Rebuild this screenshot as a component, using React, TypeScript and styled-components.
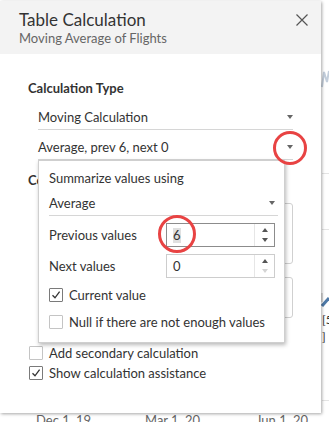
import React from "react";
import styled, { createGlobalStyle } from "styled-components";

const Global = createGlobalStyle`
  html, body { margin: 0; padding: 0; background: #fff; }
  body { font-family: Lato, "Open Sans", sans-serif; color: #333; overflow: hidden; }
  * { box-sizing: border-box; }
`;

const Page = styled.div`
  position: relative;
  width: 329px;
  height: 422px;
  overflow: hidden;
  background: #fff;
`;

/* ---------- chart behind the dialog ---------- */
const Chart = styled.div`
  position: absolute;
  inset: 0;
`;
const GridLine = styled.div<{ $top: number }>`
  position: absolute;
  left: 322px;
  right: 0;
  top: ${(p) => p.$top}px;
  height: 1px;
  background: #e4e4e4;
`;
const AxisLabel = styled.span<{ $left: number }>`
  position: absolute;
  top: 412px;
  left: ${(p) => p.$left}px;
  font-size: 13px;
  line-height: 16px;
  color: #666;
  white-space: nowrap;
`;
const ChartGlyph = styled.span<{ $top: number }>`
  position: absolute;
  left: 322px;
  top: ${(p) => p.$top}px;
  font-size: 12px;
  line-height: 14px;
  color: #333;
`;
const ChartMark = styled.svg<{ $top: number }>`
  position: absolute;
  left: 321px;
  top: ${(p) => p.$top}px;
`;

/* ---------- dialog ---------- */
const Dialog = styled.div`
  position: absolute;
  left: 0;
  top: 1px;
  width: 321px;
  height: 412px;
  background: #fff;
  box-shadow: 1px 1px 3px rgba(0, 0, 0, 0.35);
  display: flex;
  flex-direction: column;
`;

const Header = styled.div`
  height: 53px;
  background: #f3f3f3;
  padding: 8px 12px 0 19px;
  display: flex;
  justify-content: space-between;
  align-items: flex-start;
`;
const TitleBlock = styled.div`
  display: flex;
  flex-direction: column;
`;
const Title = styled.div`
  font-size: 17px;
  line-height: 21px;
  color: #333;
`;
const Subtitle = styled.div`
  font-size: 13px;
  line-height: 16px;
  color: #666;
`;
const CloseButton = styled.button`
  border: none;
  background: transparent;
  padding: 0;
  margin-top: 4px;
  width: 14px;
  height: 14px;
  display: flex;
  align-items: center;
  justify-content: center;
  cursor: pointer;
`;

const Body = styled.div`
  padding: 26px 28px 0 28px;
  display: flex;
  flex-direction: column;
`;
const SectionTitle = styled.div<{ $gap?: number }>`
  font-size: 13px;
  font-weight: 700;
  line-height: 16px;
  color: #333;
  margin-top: ${(p) => p.$gap ?? 0}px;
  margin-bottom: 4px;
`;
const SelectRow = styled.div<{ $indent: number; $width: number; $pad: number }>`
  margin-left: ${(p) => p.$indent}px;
  width: ${(p) => p.$width}px;
  display: flex;
  align-items: center;
  justify-content: space-between;
  padding: 9px ${(p) => p.$pad}px 4px 0;
  line-height: 16px;
  font-size: 13px;
  color: #333;
  border-bottom: 1px solid #d6d6d6;
`;
const Caret = styled.span`
  width: 0;
  height: 0;
  border-left: 3.5px solid transparent;
  border-right: 3.5px solid transparent;
  border-top: 4px solid #666;
`;
const ListBox = styled.div<{ $h: number; $gap: number }>`
  margin-left: 10px;
  width: 255px;
  height: ${(p) => p.$h}px;
  margin-top: ${(p) => p.$gap}px;
  border: 1px solid #d0d0d0;
  border-radius: 3px;
`;
const CheckRow = styled.label<{ $gap?: number; $indent?: number }>`
  display: flex;
  align-items: center;
  gap: 6px;
  height: 20px;
  margin-top: ${(p) => p.$gap ?? 0}px;
  margin-left: ${(p) => p.$indent ?? 0}px;
  font-size: 13px;
  color: #333;
  white-space: nowrap;
`;
const Box = styled.span<{ $checked: boolean }>`
  width: 14px;
  height: 14px;
  flex: none;
  border: 1px solid ${(p) => (p.$checked ? "#7a7a7a" : "#c4c4c4")};
  border-radius: 1px;
  background: #fff;
  display: flex;
  align-items: center;
  justify-content: center;
`;

/* ---------- popup ---------- */
const Popup = styled.div`
  position: absolute;
  left: 38px;
  top: 159px;
  width: 247px;
  height: 183px;
  background: #fff;
  border: 1px solid #cfcfcf;
  box-shadow: 1px 2px 4px rgba(0, 0, 0, 0.28);
  padding: 9px 0 0 10px;
  display: flex;
  flex-direction: column;
`;
const PopupLabel = styled.div`
  font-size: 13px;
  line-height: 16px;
  color: #333;
`;
const SpinRow = styled.div`
  display: flex;
  align-items: center;
  margin-top: 7px;
`;
const SpinLabel = styled.div`
  width: 117px;
  font-size: 13px;
  line-height: 16px;
  color: #333;
`;
const SpinBox = styled.div<{ $focused: boolean }>`
  width: 109px;
  height: 24px;
  border: 1px solid ${(p) => (p.$focused ? "#8c8c8c" : "#cdcdcd")};
  display: flex;
`;
const SpinValue = styled.div`
  flex: 1;
  padding-left: 6px;
  display: flex;
  align-items: center;
  font-size: 13px;
  color: #333;
`;
const Selected = styled.span`
  background: #e0e0e0;
  line-height: 15px;
`;
const Spinner = styled.div`
  width: 20px;
  border-left: 1px solid #e6e6e6;
  display: flex;
  flex-direction: column;
  align-items: center;
  justify-content: space-between;
  padding: 4px 0;
`;
const ArrowUp = styled.span<{ $dim?: boolean }>`
  width: 0;
  height: 0;
  border-left: 3.5px solid transparent;
  border-right: 3.5px solid transparent;
  border-bottom: 4px solid ${(p) => (p.$dim ? "#d4d4d4" : "#555")};
`;
const ArrowDown = styled.span<{ $dim?: boolean }>`
  width: 0;
  height: 0;
  border-left: 3.5px solid transparent;
  border-right: 3.5px solid transparent;
  border-top: 4px solid ${(p) => (p.$dim ? "#d4d4d4" : "#555")};
`;

/* ---------- annotations ---------- */
const Ring = styled.div<{ $x: number; $y: number; $d: number }>`
  position: absolute;
  left: ${(p) => p.$x - p.$d / 2}px;
  top: ${(p) => p.$y - p.$d / 2}px;
  width: ${(p) => p.$d}px;
  height: ${(p) => p.$d}px;
  border: 3px solid #e84343;
  border-radius: 50%;
  pointer-events: none;
`;

const Check = () => (
  <svg width="10" height="10" viewBox="0 0 10 10">
    <path d="M1.5 5.2 L4 7.8 L8.6 1.6" fill="none" stroke="#333" strokeWidth="1.3" />
  </svg>
);

const CheckItem = ({
  checked,
  label,
  gap,
  indent,
}: {
  checked: boolean;
  label: string;
  gap?: number;
  indent?: number;
}) => (
  <CheckRow $gap={gap} $indent={indent}>
    <Box $checked={checked}>{checked && <Check />}</Box>
    {label}
  </CheckRow>
);

export default function App() {
  return (
    <Page>
      <Global />
      <Chart>
        <ChartMark $top={68} width="8" height="20" viewBox="0 0 8 20">
          <path d="M1 19 L3 4 L6 14 L8 3" fill="none" stroke="#c3cedb" strokeWidth="2" />
        </ChartMark>
        <GridLine $top={173} />
        <GridLine $top={229} />
        <ChartMark $top={292} width="8" height="16" viewBox="0 0 8 16">
          <path d="M1 1 L1 10" stroke="#bbb" strokeWidth="1" />
          <path d="M1 14 L8 6" stroke="#4e79a7" strokeWidth="3" />
        </ChartMark>
        <ChartGlyph $top={313}>[5</ChartGlyph>
        <ChartGlyph $top={330}>]</ChartGlyph>
        <GridLine $top={400} />
        <AxisLabel $left={36}>Dec 1, 19</AxisLabel>
        <AxisLabel $left={145}>Mar 1, 20</AxisLabel>
        <AxisLabel $left={256}>Jun 1, 20</AxisLabel>
      </Chart>

      <Dialog>
        <Header>
          <TitleBlock>
            <Title>Table Calculation</Title>
            <Subtitle>Moving Average of Flights</Subtitle>
          </TitleBlock>
          <CloseButton aria-label="Close">
            <svg width="12" height="12" viewBox="0 0 12 12">
              <path d="M0.5 0.5 L11.5 11.5 M11.5 0.5 L0.5 11.5" stroke="#555" strokeWidth="1.2" />
            </svg>
          </CloseButton>
        </Header>

        <Body>
          <SectionTitle>Calculation Type</SectionTitle>
          <SelectRow $indent={10} $width={255} $pad={0}>
            Moving Calculation
            <Caret />
          </SelectRow>
          <SelectRow $indent={10} $width={255} $pad={0}>
            Average, prev 6, next 0
            <Caret />
          </SelectRow>

          <SectionTitle $gap={12}>Compute Using</SectionTitle>
          <ListBox $h={61} $gap={11} />
          <ListBox $h={41} $gap={13} />

          <CheckItem checked={false} label="Add secondary calculation" gap={25} indent={1} />
          <CheckItem checked label="Show calculation assistance" indent={1} />
        </Body>

        <Popup>
          <PopupLabel>Summarize values using</PopupLabel>
          <SelectRow $indent={0} $width={229} $pad={3}>
            Average
            <Caret />
          </SelectRow>
          <SpinRow>
            <SpinLabel>Previous values</SpinLabel>
            <SpinBox $focused>
              <SpinValue>
                <Selected>6</Selected>
              </SpinValue>
              <Spinner>
                <ArrowUp />
                <ArrowDown />
              </Spinner>
            </SpinBox>
          </SpinRow>
          <SpinRow>
            <SpinLabel>Next values</SpinLabel>
            <SpinBox $focused={false}>
              <SpinValue>0</SpinValue>
              <Spinner>
                <ArrowUp />
                <ArrowDown $dim />
              </Spinner>
            </SpinBox>
          </SpinRow>
          <CheckItem checked label="Current value" gap={7} />
          <CheckItem checked={false} label="Null if there are not enough values" gap={7} />
        </Popup>

        <Ring $x={290} $y={147} $d={34} />
        <Ring $x={177} $y={233} $d={38} />
      </Dialog>
    </Page>
  );
}
